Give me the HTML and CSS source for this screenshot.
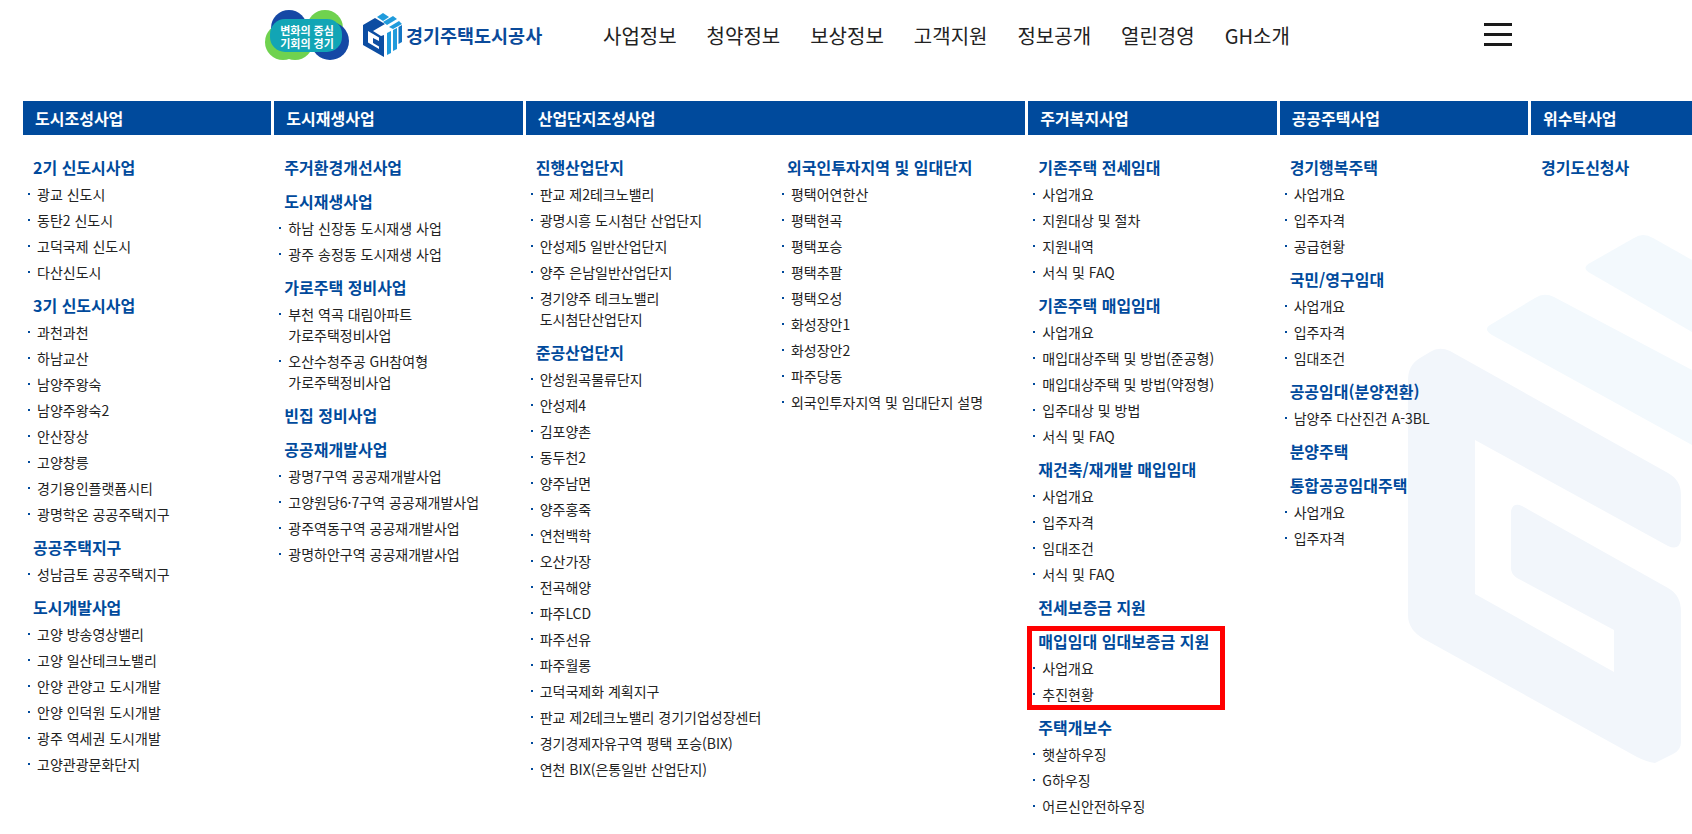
FILE: index.html
```html
<!DOCTYPE html>
<html lang="ko">
  <head>
    <meta charset="UTF-8" />
    <meta name="viewport" content="width=device-width, initial-scale=1.0" />
    <title>경기주택도시공사 전체메뉴</title>
    <link rel="stylesheet" href="styles.css">
  </head>
  <body>
    <svg class="watermark" viewBox="0 0 1692 834" aria-hidden="true">
      <path class="wm-light" d="M1590 263 L1634 238 Q1643 232 1653 238 L1692 260 L1692 332 L1590 273 Q1581 268 1590 263 Z" />
      <path class="wm-light" d="M1490 325 L1535 298 Q1544 292 1554 297 L1692 370 L1692 445 L1492 335 Q1483 329 1490 325 Z" />
      <path class="wm-main" d="M1408 380 Q1408 365 1420 358 L1430 352 Q1439 346 1450 351 L1668 473 Q1681 480 1681 495 L1681 540 Q1679 551 1668 546 L1475 440 L1475 594 L1614 672 L1614 630 L1517 578 Q1511 574 1511 568 L1511 511 Q1513 502 1522 506 L1668 588 Q1681 595 1681 612 L1681 742 Q1681 750 1673 754 L1655 763 Q1647 762 1637 757 L1424 639 Q1408 630 1408 615 Z" />
    </svg>

    <header class="site-header">
      <div class="logos">
        <svg class="logo-campaign" viewBox="0 0 84 50" aria-label="변화의 중심 기회의 경기">
          <circle class="c-navy" cx="24" cy="18" r="18" />
          <circle class="c-green" cx="60" cy="18" r="18" />
          <circle class="c-green" cx="18" cy="32" r="18" />
          <circle class="c-green" cx="30" cy="32" r="18" />
          <circle class="c-navy" cx="65" cy="31" r="19" />
          <rect class="c-teal" x="5" y="9" width="72" height="33" rx="15" />
          <text class="logo-campaign-text" x="42" y="25">변화의 중심</text>
          <text class="logo-campaign-text" x="42" y="38">기회의 경기</text>
        </svg>
        <svg class="logo-mark" viewBox="0 0 40 45" aria-hidden="true">
          <path class="m-navy" d="M0 12 L12 5 L22 11 L10 18 L18 23 L21 22 L21 44 L0 32 Z" />
          <path class="m-white" d="M5 18 L16 24.500 L16 28 L10 25 L10 30 L16 33.500 L16 36 L5 29.500 Z" />
          <path class="m-sky" d="M14 4 L20 0 L26 4 L20 8 Z M20 9 L30 3 L34 6 L24 12 Z M26 14 L36 8 L39 11 L30 16 Z" />
          <path class="m-sky" d="M24 20 L28 18 L28 40 L24 42 Z M30 17 L34 15 L34 36 L30 38 Z" />
          <path class="m-blue" d="M35.500 14 L39 12 L39 29 L35.500 31 Z" />
        </svg>
        <span class="logo-name">경기주택도시공사</span>
      </div>
      <nav class="gnb">
        <a href="#">사업정보</a>
        <a href="#">청약정보</a>
        <a href="#">보상정보</a>
        <a href="#">고객지원</a>
        <a href="#">정보공개</a>
        <a href="#">열린경영</a>
        <a href="#">GH소개</a>
      </nav>
      <button class="menu-btn" aria-label="전체메뉴"><span></span><span></span><span></span></button>
    </header>

    <main class="sitemap">
      <section class="col">
        <h2>도시조성사업</h2>
        <div class="col-body">
          <div class="group">
            <h3>2기 신도시사업</h3>
            <ul>
              <li>광교 신도시</li>
              <li>동탄2 신도시</li>
              <li>고덕국제 신도시</li>
              <li>다산신도시</li>
            </ul>
          </div>
          <div class="group">
            <h3>3기 신도시사업</h3>
            <ul>
              <li>과천과천</li>
              <li>하남교산</li>
              <li>남양주왕숙</li>
              <li>남양주왕숙2</li>
              <li>안산장상</li>
              <li>고양창릉</li>
              <li>경기용인플랫폼시티</li>
              <li>광명학온 공공주택지구</li>
            </ul>
          </div>
          <div class="group">
            <h3>공공주택지구</h3>
            <ul>
              <li>성남금토 공공주택지구</li>
            </ul>
          </div>
          <div class="group">
            <h3>도시개발사업</h3>
            <ul>
              <li>고양 방송영상밸리</li>
              <li>고양 일산테크노밸리</li>
              <li>안양 관양고 도시개발</li>
              <li>안양 인덕원 도시개발</li>
              <li>광주 역세권 도시개발</li>
              <li>고양관광문화단지</li>
            </ul>
          </div>
        </div>
      </section>

      <section class="col">
        <h2>도시재생사업</h2>
        <div class="col-body">
          <div class="group">
            <h3>주거환경개선사업</h3>
          </div>
          <div class="group">
            <h3>도시재생사업</h3>
            <ul>
              <li>하남 신장동 도시재생 사업</li>
              <li>광주 송정동 도시재생 사업</li>
            </ul>
          </div>
          <div class="group">
            <h3>가로주택 정비사업</h3>
            <ul>
              <li>부천 역곡 대림아파트<br />가로주택정비사업</li>
              <li>오산수청주공 GH참여형<br />가로주택정비사업</li>
            </ul>
          </div>
          <div class="group">
            <h3>빈집 정비사업</h3>
          </div>
          <div class="group">
            <h3>공공재개발사업</h3>
            <ul>
              <li>광명7구역 공공재개발사업</li>
              <li>고양원당6·7구역 공공재개발사업</li>
              <li>광주역동구역 공공재개발사업</li>
              <li>광명하안구역 공공재개발사업</li>
            </ul>
          </div>
        </div>
      </section>

      <section class="col col-wide">
        <h2>산업단지조성사업</h2>
        <div class="col-split">
          <div class="col-body">
            <div class="group">
              <h3>진행산업단지</h3>
              <ul>
                <li>판교 제2테크노밸리</li>
                <li>광명시흥 도시첨단 산업단지</li>
                <li>안성제5 일반산업단지</li>
                <li>양주 은남일반산업단지</li>
                <li>경기양주 테크노밸리<br />도시첨단산업단지</li>
              </ul>
            </div>
            <div class="group">
              <h3>준공산업단지</h3>
              <ul>
                <li>안성원곡물류단지</li>
                <li>안성제4</li>
                <li>김포양촌</li>
                <li>동두천2</li>
                <li>양주남면</li>
                <li>양주홍죽</li>
                <li>연천백학</li>
                <li>오산가장</li>
                <li>전곡해양</li>
                <li>파주LCD</li>
                <li>파주선유</li>
                <li>파주월롱</li>
                <li>고덕국제화 계획지구</li>
                <li>판교 제2테크노밸리 경기기업성장센터</li>
                <li>경기경제자유구역 평택 포승(BIX)</li>
                <li>연천 BIX(은통일반 산업단지)</li>
              </ul>
            </div>
          </div>
          <div class="col-body">
            <div class="group">
              <h3>외국인투자지역 및 임대단지</h3>
              <ul>
                <li>평택어연한산</li>
                <li>평택현곡</li>
                <li>평택포승</li>
                <li>평택추팔</li>
                <li>평택오성</li>
                <li>화성장안1</li>
                <li>화성장안2</li>
                <li>파주당동</li>
                <li>외국인투자지역 및 임대단지 설명</li>
              </ul>
            </div>
          </div>
        </div>
      </section>

      <section class="col">
        <h2>주거복지사업</h2>
        <div class="col-body">
          <div class="group">
            <h3>기존주택 전세임대</h3>
            <ul>
              <li>사업개요</li>
              <li>지원대상 및 절차</li>
              <li>지원내역</li>
              <li>서식 및 FAQ</li>
            </ul>
          </div>
          <div class="group">
            <h3>기존주택 매입임대</h3>
            <ul>
              <li>사업개요</li>
              <li>매입대상주택 및 방법(준공형)</li>
              <li>매입대상주택 및 방법(약정형)</li>
              <li>입주대상 및 방법</li>
              <li>서식 및 FAQ</li>
            </ul>
          </div>
          <div class="group">
            <h3>재건축/재개발 매입임대</h3>
            <ul>
              <li>사업개요</li>
              <li>입주자격</li>
              <li>임대조건</li>
              <li>서식 및 FAQ</li>
            </ul>
          </div>
          <div class="group">
            <h3>전세보증금 지원</h3>
          </div>
          <div class="group group-marked">
            <h3>매입임대 임대보증금 지원</h3>
            <ul>
              <li>사업개요</li>
              <li>추진현황</li>
            </ul>
          </div>
          <div class="group">
            <h3>주택개보수</h3>
            <ul>
              <li>햇살하우징</li>
              <li>G하우징</li>
              <li>어르신안전하우징</li>
            </ul>
          </div>
        </div>
      </section>

      <section class="col">
        <h2>공공주택사업</h2>
        <div class="col-body">
          <div class="group">
            <h3>경기행복주택</h3>
            <ul>
              <li>사업개요</li>
              <li>입주자격</li>
              <li>공급현황</li>
            </ul>
          </div>
          <div class="group">
            <h3>국민/영구임대</h3>
            <ul>
              <li>사업개요</li>
              <li>입주자격</li>
              <li>임대조건</li>
            </ul>
          </div>
          <div class="group">
            <h3>공공임대(분양전환)</h3>
            <ul>
              <li>남양주 다산진건 A-3BL</li>
            </ul>
          </div>
          <div class="group">
            <h3>분양주택</h3>
          </div>
          <div class="group">
            <h3>통합공공임대주택</h3>
            <ul>
              <li>사업개요</li>
              <li>입주자격</li>
            </ul>
          </div>
        </div>
      </section>

      <section class="col">
        <h2>위수탁사업</h2>
        <div class="col-body">
          <div class="group">
            <h3>경기도신청사</h3>
          </div>
        </div>
      </section>
    </main>
  </body>
</html>
```

FILE: styles.css
```css
* {
  margin: 0;
  padding: 0;
  box-sizing: border-box;
}

html,
body {
  height: 100%;
  overflow: hidden;
}

body {
  position: relative;
  font-family: "Noto Sans CJK KR", "Noto Sans", sans-serif;
  background-color: #fff;
  color: #222;
}

.watermark {
  position: absolute;
  top: 0;
  left: 0;
  width: 1692px;
  height: 834px;
}

.wm-main {
  fill: #f2f6fb;
}

.wm-light {
  fill: #f3f9fd;
}

.site-header {
  position: relative;
  display: flex;
  align-items: center;
  height: 70px;
  padding-left: 265px;
}

.logos {
  display: flex;
  align-items: center;
  width: 338px;
}

.logo-campaign {
  width: 84px;
  height: 50px;
  margin-right: 14px;
}

.c-navy {
  fill: #1548a5;
}

.c-green {
  fill: #6fd24f;
}

.c-teal {
  fill: #12a5b5;
}

.logo-campaign-text {
  fill: #fff;
  font-size: 11px;
  font-weight: 700;
  text-anchor: middle;
}

.logo-mark {
  width: 40px;
  height: 45px;
  margin-right: 3px;
}

.m-navy {
  fill: #0c4da2;
}

.m-white {
  fill: #fff;
}

.m-sky {
  fill: #1f9bdc;
}

.m-blue {
  fill: #1576c4;
}

.logo-name {
  font-size: 18.5px;
  font-weight: 700;
  color: #0a4a9a;
  white-space: nowrap;
}

.gnb {
  display: flex;
  gap: 30px;
}

.gnb a {
  font-size: 20px;
  color: #222;
  text-decoration: none;
  white-space: nowrap;
}

.menu-btn {
  position: absolute;
  top: 23px;
  left: 1484px;
  display: flex;
  flex-direction: column;
  gap: 7px;
  width: 28px;
  background: none;
  border: none;
}

.menu-btn span {
  height: 3px;
  background-color: #1a1a1a;
}

.sitemap {
  position: relative;
  display: grid;
  grid-template-columns: repeat(7, 248.33px);
  column-gap: 3px;
  width: 1780px;
  margin-top: 31px;
  margin-left: 23px;
}

.col-wide {
  grid-column: span 2;
}

.col h2 {
  height: 34px;
  padding-left: 12px;
  font-size: 16px;
  font-weight: 700;
  line-height: 34px;
  color: #fff;
  background-color: #004a9c;
}

.col-split {
  display: grid;
  grid-template-columns: 248.33px 248.33px;
  column-gap: 3px;
}

.col-body {
  padding-top: 20px;
}

.group {
  position: relative;
  margin-bottom: 9px;
}

.group h3 {
  padding-left: 10px;
  font-size: 16px;
  font-weight: 700;
  line-height: 25px;
  color: #004a9c;
}

.group ul {
  margin: 1px 0 -1px;
  list-style: none;
}

.group li {
  position: relative;
  padding: 2.5px 0 2.5px 14px;
  font-size: 14px;
  line-height: 21px;
  white-space: nowrap;
}

.group li::before {
  content: "";
  position: absolute;
  top: 12px;
  left: 5px;
  width: 2px;
  height: 2px;
  background-color: #004a9c;
}

.group-marked::after {
  content: "";
  box-sizing: border-box;
  position: absolute;
  top: -3px;
  left: -1px;
  width: 198px;
  height: 84px;
  border: 5px solid #f00;
}
```
